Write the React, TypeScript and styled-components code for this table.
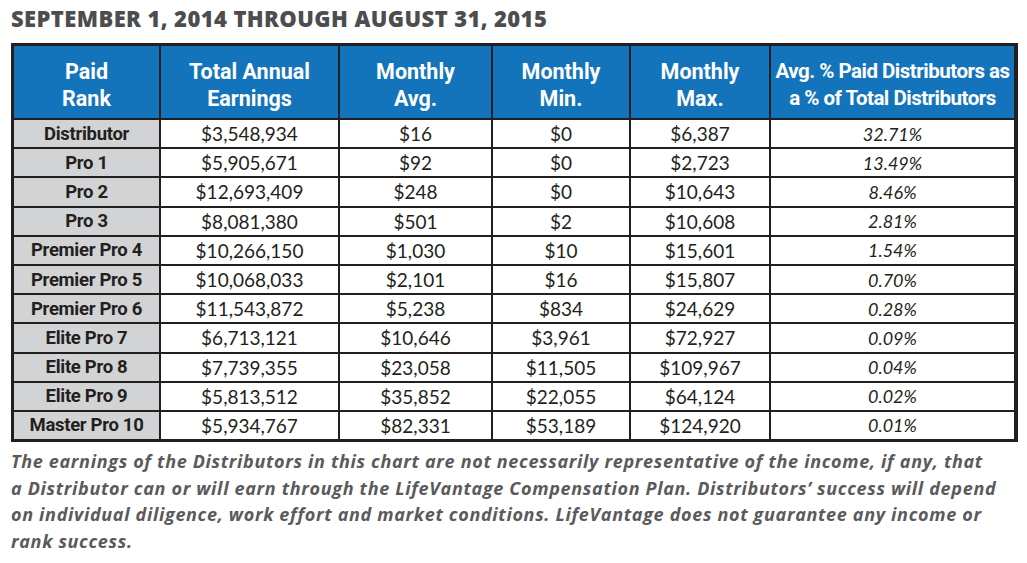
import React from "react";
import styled, { createGlobalStyle } from "styled-components";

const Global = createGlobalStyle`
  html, body { margin: 0; padding: 0; background: #ffffff; }
  body { font-family: "Lato", "Open Sans", sans-serif; }
`;

const Page = styled.div`
  width: 1027px;
  height: 563px;
  box-sizing: border-box;
  padding: 5px 9px 0 11px;
  overflow: hidden;
`;

const Title = styled.h1`
  margin: 0;
  height: 38px;
  font-family: "Open Sans", sans-serif;
  font-weight: 800;
  font-size: 22px;
  line-height: 26px;
  color: #4d4d4f;
  letter-spacing: 0.4px;
  white-space: nowrap;
`;

const Grid = styled.div`
  display: grid;
  grid-template-columns: 145px 177px 151px 136px 138px 243px;
  grid-template-rows: 72px;
  grid-auto-rows: 27.2px;
  gap: 2px;
  padding: 3px 4px 3px 3px;
  background: #231f20;
  width: 1007px;
  box-sizing: border-box;
`;

const HeadCell = styled.div<{ $tight?: boolean }>`
  background: #1474bb;
  color: #ffffff;
  display: flex;
  align-items: center;
  justify-content: center;
  text-align: center;
  white-space: nowrap;
  font-family: "Roboto", sans-serif;
  font-weight: 700;
  font-size: ${(p) => (p.$tight ? "20.5px" : "21.5px")};
  letter-spacing: ${(p) => (p.$tight ? "-0.5px" : "0")};
  line-height: 27px;
  padding-top: 5px;
  box-sizing: border-box;
`;

const LabelCell = styled.div`
  background: #d1d3d4;
  color: #231f20;
  display: flex;
  align-items: center;
  justify-content: center;
  white-space: nowrap;
  font-family: "Roboto", sans-serif;
  font-weight: 700;
  font-size: 18.5px;
  letter-spacing: -0.3px;
`;

const DataCell = styled.div<{ $italic?: boolean }>`
  background: #ffffff;
  color: #231f20;
  display: flex;
  align-items: center;
  justify-content: center;
  font-family: "Lato", "Open Sans", sans-serif;
  font-weight: 400;
  font-size: ${(p) => (p.$italic ? "18px" : "19px")};
  font-style: ${(p) => (p.$italic ? "italic" : "normal")};
`;

const Footer = styled.p`
  margin: 6px 0 0 0;
  font-family: "Open Sans", sans-serif;
  font-weight: 700;
  font-style: italic;
  font-size: 18px;
  line-height: 26.5px;
  letter-spacing: 0.67px;
  color: #5a5a5c;
  white-space: nowrap;
`;

const headers: React.ReactNode[] = [
  <>Paid<br />Rank</>,
  <>Total Annual<br />Earnings</>,
  <>Monthly<br />Avg.</>,
  <>Monthly<br />Min.</>,
  <>Monthly<br />Max.</>,
  <>Avg. % Paid Distributors as<br />a % of Total Distributors</>,
];

const rows: string[][] = [
  ["Distributor", "$3,548,934", "$16", "$0", "$6,387", "32.71%"],
  ["Pro 1", "$5,905,671", "$92", "$0", "$2,723", "13.49%"],
  ["Pro 2", "$12,693,409", "$248", "$0", "$10,643", "8.46%"],
  ["Pro 3", "$8,081,380", "$501", "$2", "$10,608", "2.81%"],
  ["Premier Pro 4", "$10,266,150", "$1,030", "$10", "$15,601", "1.54%"],
  ["Premier Pro 5", "$10,068,033", "$2,101", "$16", "$15,807", "0.70%"],
  ["Premier Pro 6", "$11,543,872", "$5,238", "$834", "$24,629", "0.28%"],
  ["Elite Pro 7", "$6,713,121", "$10,646", "$3,961", "$72,927", "0.09%"],
  ["Elite Pro 8", "$7,739,355", "$23,058", "$11,505", "$109,967", "0.04%"],
  ["Elite Pro 9", "$5,813,512", "$35,852", "$22,055", "$64,124", "0.02%"],
  ["Master Pro 10", "$5,934,767", "$82,331", "$53,189", "$124,920", "0.01%"],
];

export default function App() {
  return (
    <>
      <Global />
      <Page>
        <Title>SEPTEMBER 1, 2014 THROUGH AUGUST 31, 2015</Title>
        <Grid>
          {headers.map((h, i) => (
            <HeadCell key={`h${i}`} $tight={i === 5}>
              <span>{h}</span>
            </HeadCell>
          ))}
          {rows.map((r, ri) =>
            r.map((c, ci) =>
              ci === 0 ? (
                <LabelCell key={`${ri}-${ci}`}>{c}</LabelCell>
              ) : (
                <DataCell key={`${ri}-${ci}`} $italic={ci === 5}>
                  {c}
                </DataCell>
              )
            )
          )}
        </Grid>
        <Footer>
          The earnings of the Distributors in this chart are not necessarily representative of the income, if any, that
          <br />
          a Distributor can or will earn through the LifeVantage Compensation Plan. Distributors’ success will depend
          <br />
          on individual diligence, work effort and market conditions. LifeVantage does not guarantee any income or
          <br />
          rank success.
        </Footer>
      </Page>
    </>
  );
}
